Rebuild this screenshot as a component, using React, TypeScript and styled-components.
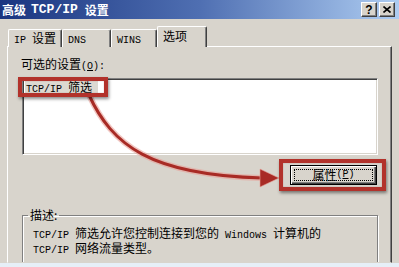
import React from "react"
import styled, { createGlobalStyle } from "styled-components"

const Global = createGlobalStyle`
  html, body {
    margin: 0;
    padding: 0;
    background: #e6eff7;
  }
  body {
    font-family: "Noto Sans CJK SC", sans-serif;
    font-size: 12px;
  }
`

const Window = styled.div`
  position: relative;
  width: 399px;
  height: 263px;
  background: #d8d4cc;
  display: flex;
  flex-direction: column;
  overflow: hidden;
  color: #000;
`

const TitleBar = styled.div`
  flex: none;
  height: 19px;
  display: flex;
  align-items: center;
  justify-content: space-between;
  padding: 0 4px 0 2px;
  background: linear-gradient(to right, #1a3580, #4f6fb2 50%, #aecdf2);
  color: #fff;
  font-weight: bold;
`

const Title = styled.div`
  display: flex;
  align-items: center;
  line-height: 19px;
  white-space: pre;
`

const Lat = styled.span<{ $size?: number; $gap?: string }>`
  font-family: "Liberation Mono", monospace;
  font-size: ${(p) => p.$size ?? 10}px;
  margin: ${(p) => p.$gap ?? "0"};
`

const Caps = styled.div`
  display: flex;
  gap: 2px;
`

const CapButton = styled.div`
  width: 16px;
  height: 15px;
  box-sizing: border-box;
  background: #d8d4cc;
  border: 1px solid;
  border-color: #fff #404040 #404040 #fff;
  box-shadow: inset -1px -1px #808080;
  color: #000;
  display: flex;
  align-items: center;
  justify-content: center;
  font-family: "Liberation Sans", sans-serif;
  font-weight: bold;
  font-size: 12px;
`

const Body = styled.div`
  flex: 1;
  display: flex;
  flex-direction: column;
  padding: 8px 7px 0 7px;
  min-height: 0;
`

const TabStrip = styled.div`
  flex: none;
  height: 20px;
  display: flex;
  align-items: flex-end;
  padding-left: 1px;
  position: relative;
  z-index: 1;
  margin-bottom: -1px;
`

const Tab = styled.div<{ $w: number; $active?: boolean }>`
  width: ${(p) => p.$w}px;
  height: ${(p) => (p.$active ? 21 : 18)}px;
  box-sizing: border-box;
  background: #d8d4cc;
  border-top: 1px solid #fff;
  border-left: 1px solid #fff;
  border-right: 1px solid #404040;
  box-shadow: inset -1px 0 #808080;
  border-radius: 2px 2px 0 0;
  padding-left: 5px;
  line-height: ${(p) => (p.$active ? 17 : 16)}px;
  white-space: pre;
`

const Panel = styled.div`
  flex: 1;
  min-height: 0;
  border: 1px solid;
  border-color: #fff #404040 transparent #fff;
  box-shadow: inset -1px 0 #808080;
  padding: 11px 13px 0 14px;
  display: flex;
  flex-direction: column;
  overflow: hidden;
  & > * {
    flex-shrink: 0;
  }
`

const Label = styled.div`
  line-height: 12px;
  white-space: pre;
  margin-left: -1px;
`

const Under = styled.span`
  text-decoration: underline;
`

const ListBox = styled.div`
  position: relative;
  margin-top: 5px;
  height: 77px;
  box-sizing: border-box;
  background: #fff;
  border: 1px solid;
  border-color: #808080 #fff #fff #808080;
  box-shadow: inset 1px 1px #404040, inset -1px -1px #d8d4cc;
  padding: 2px 2px;
  display: flex;
  align-items: flex-start;
`

const Item = styled.div`
  background: #dcd9d1;
  padding: 0 6px 1px 1px;
  line-height: 12px;
  white-space: pre;
`

const Highlight = styled.div<{ $l: number; $t: number; $w: number; $h: number }>`
  position: absolute;
  left: ${(p) => p.$l}px;
  top: ${(p) => p.$t}px;
  width: ${(p) => p.$w}px;
  height: ${(p) => p.$h}px;
  box-sizing: border-box;
  border: 4px solid #b2322b;
  box-shadow: 1px 2px 3px rgba(0, 0, 0, 0.45), inset 0 0 1px rgba(120, 20, 20, 0.6);
  pointer-events: none;
  z-index: 4;
`

const ButtonRow = styled.div`
  display: flex;
  justify-content: flex-end;
  margin-top: 10px;
  padding-right: 1px;
`

const ButtonWrap = styled.div`
  position: relative;
`

const PushButton = styled.div`
  width: 87px;
  height: 20px;
  box-sizing: border-box;
  border: 1px solid #000;
  background: #d8d4cc;
  box-shadow: inset 1px 1px #fff, inset -1px -1px #404040, inset -2px -2px #808080;
  display: flex;
  align-items: center;
  justify-content: center;
  position: relative;
  white-space: pre;
  line-height: 12px;
  &::after {
    content: "";
    position: absolute;
    inset: 3px;
    border: 1px dotted #000;
  }
`

const Group = styled.fieldset`
  margin: 24px 0 0 0;
  height: 70px;
  padding: 6px 10px 0 10px;
  border: 1px solid #808080;
  box-shadow: 1px 1px 0 #fff, inset 1px 1px 0 #fff;
`

const Legend = styled.legend`
  margin-left: -5px;
  padding: 0 2px;
  line-height: 12px;
`

const Desc = styled.div`
  line-height: 12px;
  white-space: pre;
`

const Overlay = styled.svg`
  position: absolute;
  left: 0;
  top: 0;
  pointer-events: none;
  z-index: 3;
`

export default function App() {
  return (
    <>
      <Global />
      <Window>
        <TitleBar>
          <Title>
            高级<Lat $size={13} $gap="0 7px 0 5px">TCP/IP</Lat>设置
          </Title>
          <Caps>
            <CapButton>?</CapButton>
            <CapButton>
              <svg width="8" height="7" viewBox="0 0 8 7">
                <path d="M0.5 0.5 L7.5 6.5 M7.5 0.5 L0.5 6.5" stroke="#000" strokeWidth="1.6" />
              </svg>
            </CapButton>
          </Caps>
        </TitleBar>
        <Body>
          <TabStrip>
            <Tab $w={54}>
              <Lat>IP </Lat>设置
            </Tab>
            <Tab $w={49}>
              <Lat>DNS</Lat>
            </Tab>
            <Tab $w={46}>
              <Lat>WINS</Lat>
            </Tab>
            <Tab $w={50} $active>
              选项
            </Tab>
          </TabStrip>
          <Panel>
            <Label>
              可选的设置<Lat>(<Under>O</Under>):</Lat>
            </Label>
            <ListBox>
              <Item>
                <Lat>TCP/IP </Lat>筛选
              </Item>
              <Highlight $l={-5} $t={-2} $w={90} $h={20} />
            </ListBox>
            <ButtonRow>
              <ButtonWrap>
                <PushButton>
                  属性<Lat>(<Under>P</Under>)</Lat>
                </PushButton>
                <Highlight $l={-11} $t={-6} $w={107} $h={32} />
              </ButtonWrap>
            </ButtonRow>
            <Group>
              <Legend>描述:</Legend>
              <Desc>
                <Lat>TCP/IP </Lat>筛选允许您控制连接到您的<Lat> Windows </Lat>计算机的
                {"\n"}
                <Lat>TCP/IP </Lat>网络流量类型。
              </Desc>
            </Group>
          </Panel>
        </Body>
        <Overlay width="399" height="263" viewBox="0 0 399 263">
          <path
            d="M89 95 C112 145 150 175 262 178"
            fill="none"
            stroke="#e8a098"
            strokeOpacity="0.6"
            strokeWidth="6"
          />
          <path d="M89 95 C112 145 150 175 262 178" fill="none" stroke="#a82b25" strokeWidth="3" />
          <polygon points="260,169 279,178 260,187" fill="#a82b25" stroke="#e8a098" strokeOpacity="0.6" strokeWidth="1" />
        </Overlay>
      </Window>
    </>
  )
}
